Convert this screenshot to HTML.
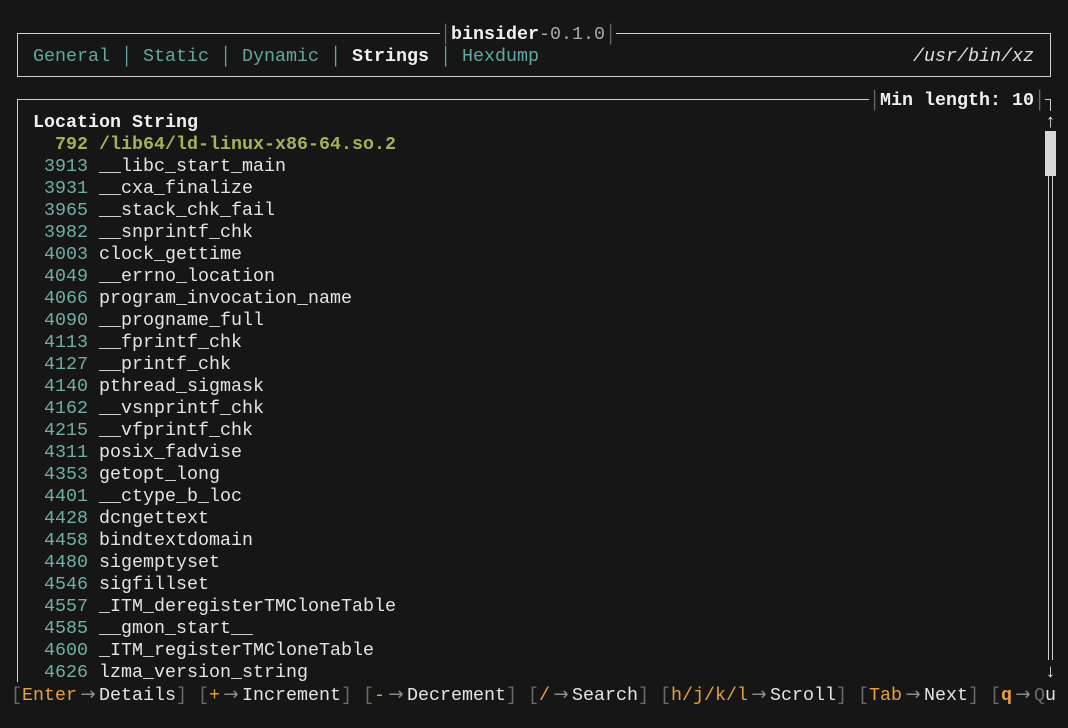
<!DOCTYPE html>
<html><head><meta charset="utf-8"><style>
html,body{margin:0;padding:0;background:#161616;}
body{width:1068px;height:728px;position:relative;overflow:hidden;font-family:"Liberation Mono","DejaVu Sans Mono",monospace;font-size:18.33px;color:#e4e4e4;}
.r{position:absolute;white-space:pre;line-height:22px;margin-top:2px;}
.h{position:absolute;height:1px;background:#cfcfcf;}
.v{position:absolute;width:1px;background:#cfcfcf;}
.t{color:#62a8a0}
.g{color:#6a6a6a}
.n{color:#6fb0a6}
.b{font-weight:bold;color:#f0f0f0}
.o{color:#e7a13e}
.a{display:inline-block;width:22px;text-align:center;color:#8a8a8a;font-family:"DejaVu Sans",sans-serif;}
</style></head><body>
<div class="h" style="left:17px;top:33px;width:423px"></div>
<div class="h" style="left:616px;top:33px;width:434px"></div>
<div class="h" style="left:17px;top:76px;width:1033px"></div>
<div class="v" style="left:17px;top:33px;height:44px"></div>
<div class="v" style="left:1050px;top:33px;height:44px"></div>
<div class="r" style="left:440px;top:22px"><span class="g">│</span><span class="b">binsider</span><span style="color:#aaa">-0.1.0</span><span class="g">│</span></div>
<div class="r" style="left:33px;top:44px"><span class="t">General</span> <span class="t">│</span> <span class="t">Static</span> <span class="t">│</span> <span class="t">Dynamic</span> <span class="t">│</span> <span class="b">Strings</span> <span class="t">│</span> <span class="t">Hexdump</span></div>
<div class="r" style="left:913px;top:44px;font-style:italic;color:#e0e0e0">/usr/bin/xz</div>
<div class="h" style="left:17px;top:99px;width:852px"></div>
<div class="v" style="left:17px;top:99px;height:583px"></div>
<div class="r" style="left:869px;top:88px"><span class="g">│</span><span class="b">Min length: 10</span><span class="g">│</span></div>
<div class="h" style="left:1045px;top:99px;width:6px"></div>
<div class="v" style="left:1050px;top:99px;height:12px"></div>
<div class="r" style="left:1045px;top:110px;color:#dde8f0">↑</div>
<div style="position:absolute;left:1045px;top:131px;width:11px;height:45px;background:#d8d8d8"></div>
<div class="v" style="left:1048px;top:176px;height:484px"></div>
<div class="v" style="left:1052px;top:176px;height:484px"></div>
<div class="r" style="left:1045px;top:660px;color:#dde8f0">↓</div>
<div class="r b" style="left:33px;top:110px">Location String</div>
<div class="r" style="left:44px;top:132px;color:#a3b35a;font-weight:bold"> 792 /lib64/ld-linux-x86-64.so.2</div>
<div class="r" style="left:44px;top:154px"><span class="n">3913</span> __libc_start_main
<span class="n">3931</span> __cxa_finalize
<span class="n">3965</span> __stack_chk_fail
<span class="n">3982</span> __snprintf_chk
<span class="n">4003</span> clock_gettime
<span class="n">4049</span> __errno_location
<span class="n">4066</span> program_invocation_name
<span class="n">4090</span> __progname_full
<span class="n">4113</span> __fprintf_chk
<span class="n">4127</span> __printf_chk
<span class="n">4140</span> pthread_sigmask
<span class="n">4162</span> __vsnprintf_chk
<span class="n">4215</span> __vfprintf_chk
<span class="n">4311</span> posix_fadvise
<span class="n">4353</span> getopt_long
<span class="n">4401</span> __ctype_b_loc
<span class="n">4428</span> dcngettext
<span class="n">4458</span> bindtextdomain
<span class="n">4480</span> sigemptyset
<span class="n">4546</span> sigfillset
<span class="n">4557</span> _ITM_deregisterTMCloneTable
<span class="n">4585</span> __gmon_start__
<span class="n">4600</span> _ITM_registerTMCloneTable
<span class="n">4626</span> lzma_version_string</div>
<div class="r" style="left:11px;top:682px"><span class="g">[</span><span class="o">Enter</span><span class="a">→</span>Details<span class="g">]</span> <span class="g">[</span><span class="o">+</span><span class="a">→</span>Increment<span class="g">]</span> <span class="g">[</span><span class="o">-</span><span class="a">→</span>Decrement<span class="g">]</span> <span class="g">[</span><span class="o">/</span><span class="a">→</span>Search<span class="g">]</span> <span class="g">[</span><span class="o">h/j/k/l</span><span class="a">→</span>Scroll<span class="g">]</span> <span class="g">[</span><span class="o">Tab</span><span class="a">→</span>Next<span class="g">]</span> <span class="g">[</span><span class="o" style="font-weight:bold">q</span><span class="a">→</span><span class="g">Q</span>u</div>
</body></html>
